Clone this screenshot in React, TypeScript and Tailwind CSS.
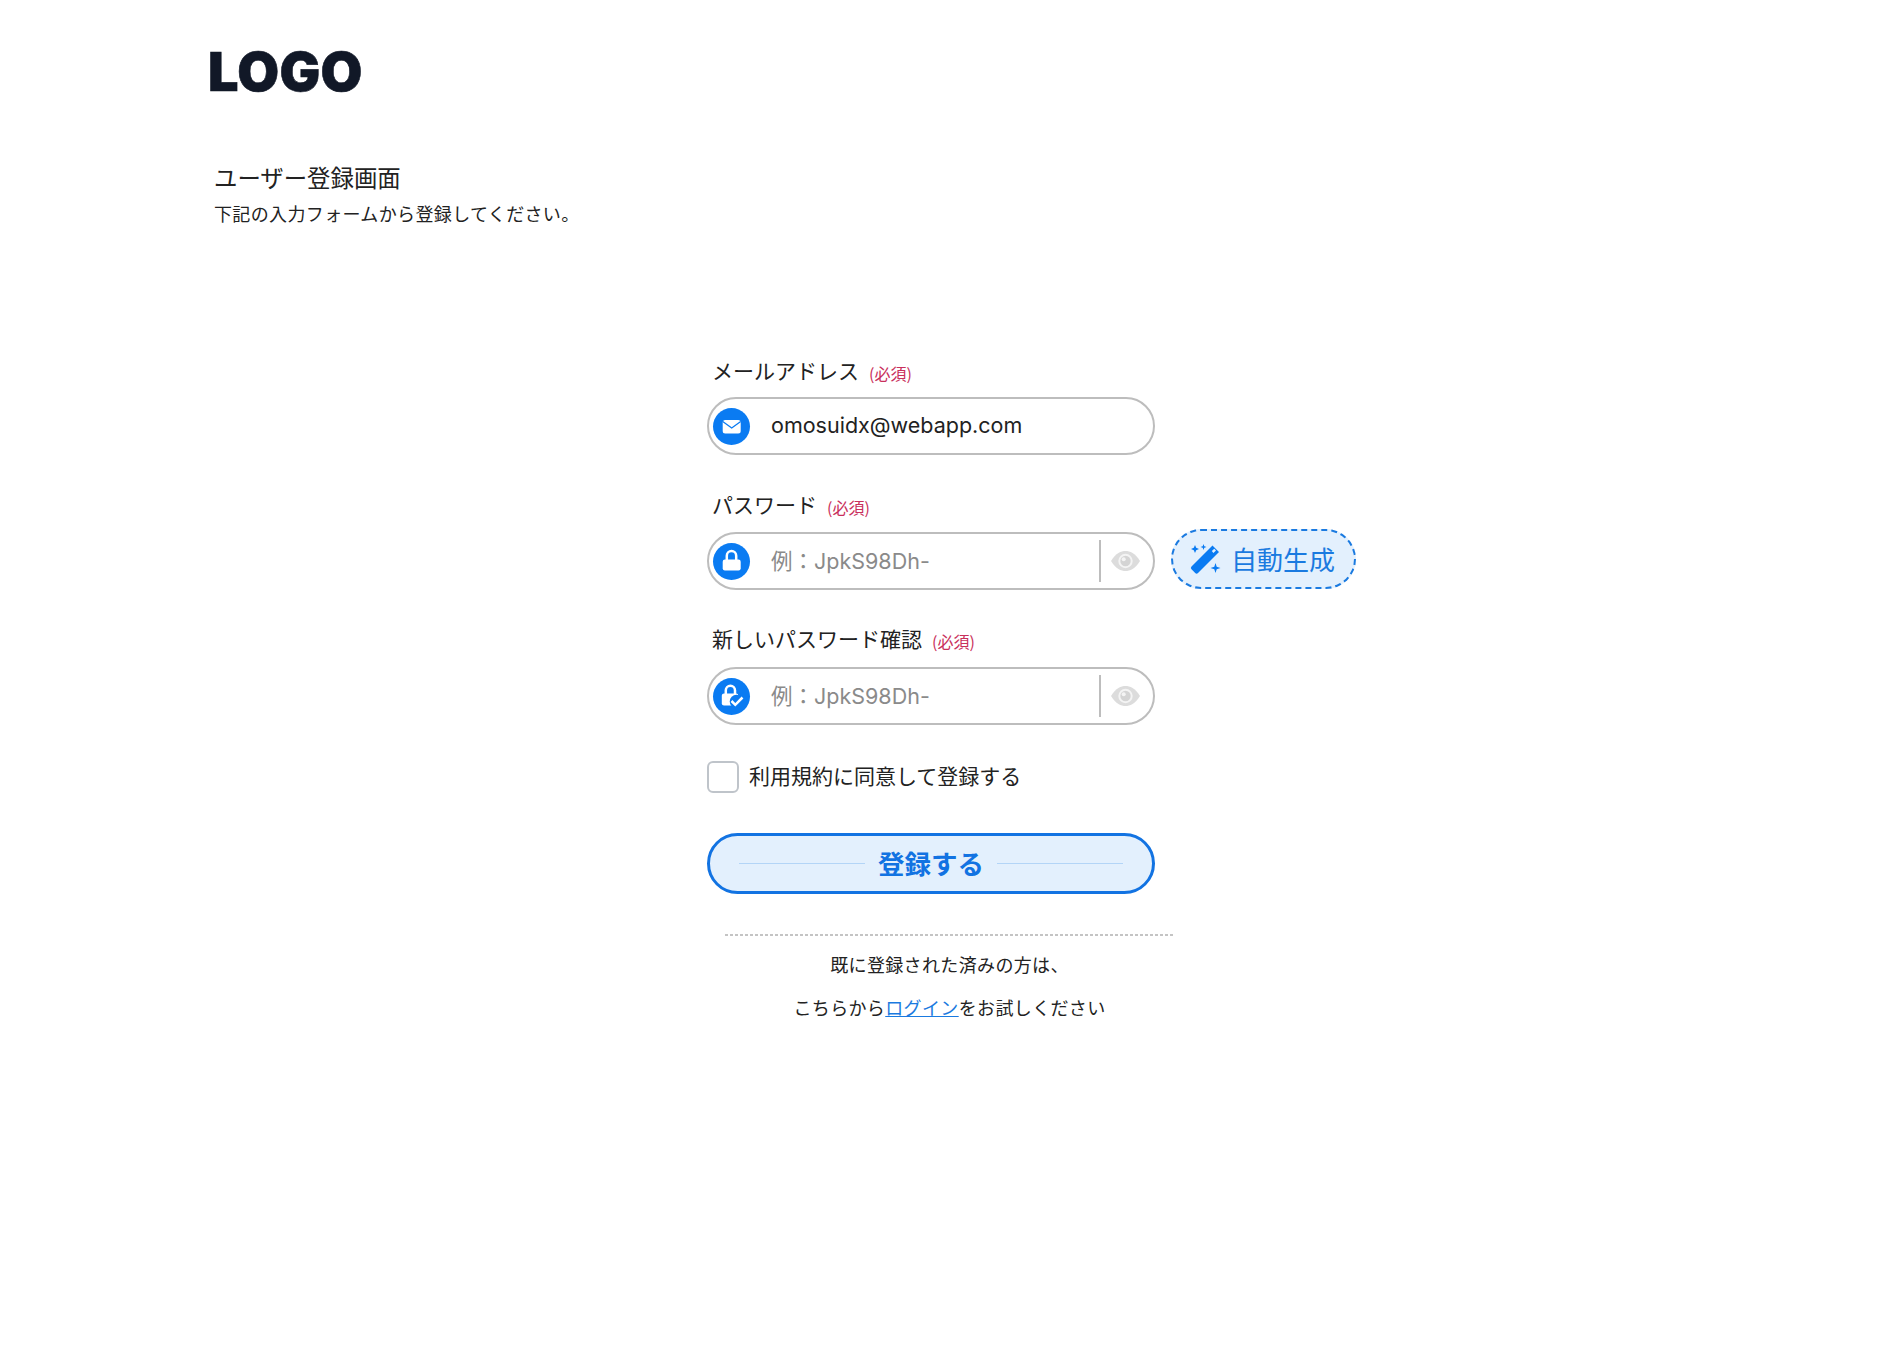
import React from "react";

const JP = "font-['Noto_Sans_CJK_JP','Noto_Sans',sans-serif]";
const LATIN = "font-['Inter','Noto_Sans_CJK_JP',sans-serif]";

function IconCircle({ children }: { children: React.ReactNode }) {
  return (
    <span className="ml-[4px] flex h-[37px] w-[37px] shrink-0 items-center justify-center rounded-full bg-[#0a7bf2]">
      <svg width="37" height="37" viewBox="0 0 37 37">{children}</svg>
    </span>
  );
}

const Mail = () => (
  <IconCircle>
    <rect x="9.7" y="12" width="18" height="13.5" rx="2.5" fill="#fff" />
    <path d="M9.7 13.5 L18.7 20 L27.7 13.5" fill="none" stroke="#0a7bf2" strokeWidth="1.3" />
  </IconCircle>
);

const Lock = () => (
  <IconCircle>
    <path d="M13.8 17.5 V12.8 a4.7 4.7 0 0 1 9.4 0 V17.5" fill="none" stroke="#fff" strokeWidth="2.5" />
    <rect x="9.7" y="16.5" width="18" height="11" rx="2.2" fill="#fff" />
  </IconCircle>
);

const LockCheck = () => (
  <IconCircle>
    <path d="M12.8 16.5 V12.3 a4.6 4.6 0 0 1 9.2 0 V16.5" fill="none" stroke="#fff" strokeWidth="2.5" />
    <rect x="8.8" y="15.5" width="16.5" height="12" rx="2.2" fill="#fff" />
    <circle cx="23.5" cy="23.5" r="6.8" fill="#0a7bf2" />
    <path d="M18.5 23 L22.3 26.8 L29.5 19.5" fill="none" stroke="#fff" strokeWidth="2.5" />
  </IconCircle>
);

const Eye = () => (
  <svg width="29" height="20" viewBox="0 0 29 20" className="shrink-0">
    <path d="M0 10 C5 2 10 0 14.5 0 C19 0 24 2 29 10 C24 18 19 20 14.5 20 C10 20 5 18 0 10 Z" fill="#dcdcdc" />
    <circle cx="14.5" cy="10" r="7.2" fill="#f4f4f4" />
    <circle cx="14.5" cy="10" r="5.2" fill="#d4d4d4" />
    <circle cx="12.7" cy="8.2" r="2" fill="#f4f4f4" />
  </svg>
);

const Wand = () => (
  <svg width="32" height="32" viewBox="0 0 32 32" className="shrink-0">
    <path d="M23.5 2.5 L30 9 L9 30 a2 2 0 0 1 -2.8 0 L2.5 26.2 a2 2 0 0 1 0 -2.8 Z" fill="#0a7bf2" />
    <path d="M22.8 8 L25.3 5.7 L27 7.5 L24.4 10 Z" fill="#e3f0fd" />
    <path d="M6 2 L7.2 4.8 L10 6 L7.2 7.2 L6 10 L4.8 7.2 L2 6 L4.8 4.8 Z" fill="#0a7bf2" />
    <path d="M14.5 1 L15.3 3.2 L17.5 4 L15.3 4.8 L14.5 7 L13.7 4.8 L11.5 4 L13.7 3.2 Z" fill="#0a7bf2" />
    <path d="M26.5 20 L27.7 23.8 L31.5 25 L27.7 26.2 L26.5 30 L25.3 26.2 L21.5 25 L25.3 23.8 Z" fill="#0a7bf2" />
  </svg>
);

function Label({ text }: { text: string }) {
  return (
    <div className="ml-[5px] flex h-[27px] items-center gap-[10px]">
      <span className="pb-[3px] text-[21px] leading-[27px] text-[#222]">{text}</span>
      <span className="mt-[2px] text-[16px] leading-[20px] text-[#c9305c]">(必須)</span>
    </div>
  );
}

function Field({ icon, value, placeholder }: { icon: React.ReactNode; value?: string; placeholder?: string }) {
  return (
    <div className="flex h-[58px] w-[448px] shrink-0 items-center rounded-full border-2 border-[#bdbdbd] bg-white">
      {icon}
      {value ? (
        <span className={`ml-[21px] pb-[1px] text-[21.5px] text-[#222] ${LATIN}`}>{value}</span>
      ) : (
        <>
          <span className={`ml-[21px] flex-1 text-[21.5px] text-[#8a8a8a] ${LATIN}`}>{placeholder}</span>
          <span className="mr-[10px] h-[42px] w-[2px] bg-[#bdbdbd]" />
          <Eye />
          <span className="w-[13px]" />
        </>
      )}
    </div>
  );
}

export default function App() {
  return (
    <div className={`min-h-[1350px] bg-white ${JP}`}>
      <header className="pl-[208px] pt-[40px]">
        <div className="font-['Inter',sans-serif] text-[54px] font-black leading-[64px] tracking-[0.3px] text-[#111827] [-webkit-text-stroke:0.6px_#111827]">
          LOGO
        </div>
      </header>

      <section className="pl-[214px] pt-[55px]">
        <h1 className="text-[23.4px] font-normal leading-[36px] text-[#222]">ユーザー登録画面</h1>
        <p className="mt-[4px] text-[18px] leading-[28px] tracking-[0.36px] text-[#222]">下記の入力フォームから登録してください。</p>
      </section>

      <main className="ml-[707px] w-[448px] pt-[131px]">
        <Label text="メールアドレス" />
        <div className="mt-[12px]">
          <Field icon={<Mail />} value="omosuidx@webapp.com" />
        </div>

        <div className="mt-[37px]">
          <Label text="パスワード" />
        </div>
        <div className="mt-[10px] flex w-[650px] items-end gap-[16px]">
          <Field icon={<Lock />} placeholder="例：JpkS98Dh-" />
          <button className="mb-px flex h-[60px] w-[185px] shrink-0 items-center gap-[10px] rounded-full border-2 border-dashed border-[#1a7ae0] bg-[#e3f0fd] pl-[16px] text-[26px] text-[#1a7ae0]">
            <Wand />
            <span className="pb-[2px]">自動生成</span>
          </button>
        </div>

        <div className="mt-[36px]">
          <Label text="新しいパスワード確認" />
        </div>
        <div className="mt-[14px]">
          <Field icon={<LockCheck />} placeholder="例：JpkS98Dh-" />
        </div>

        <label className="mt-[36px] flex h-[32px] items-center gap-[10px]">
          <span className="h-[32px] w-[32px] rounded-[6px] border-2 border-[#bfc4ca] bg-white" />
          <span className="pb-[3px] text-[21px] leading-[29px] text-[#222]">利用規約に同意して登録する</span>
        </label>

        <button className="mt-[40px] flex h-[61px] w-[448px] items-center justify-center gap-[13px] rounded-full border-[3px] border-[#1273e2] bg-[#e3f0fd] px-[29px]">
          <span className="h-px flex-1 bg-[#b3d5f7]" />
          <span className="pb-[1px] text-[26.5px] font-bold leading-[36px] text-[#1273e2]">登録する</span>
          <span className="h-px flex-1 bg-[#b3d5f7]" />
        </button>

        <div className="ml-[18px] mt-[40px] h-[2px] w-[449px] bg-[repeating-linear-gradient(90deg,#c4c4c4_0_3px,transparent_3px_5px)]" />

        <div className="ml-[18px] mt-[7px] w-[449px] text-center text-[18px] leading-[43px] tracking-[0.36px] text-[#222]">
          <p>既に登録された済みの方は、</p>
          <p>
            こちらから<a className="text-[#1a7ae0] underline">ログイン</a>をお試しください
          </p>
        </div>
      </main>
    </div>
  );
}
